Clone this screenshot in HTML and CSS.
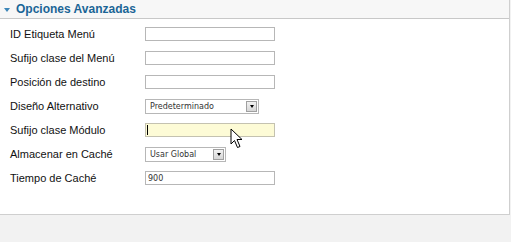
FILE: index.html
```html
<!DOCTYPE html>
<html lang="es">
  <head>
    <meta charset="UTF-8" />
    <title>Opciones Avanzadas</title>
    <link rel="stylesheet" href="styles.css">
  </head>
  <body>
    <div class="panel">
      <h3 class="panel-title"><span class="toggle"></span>Opciones Avanzadas</h3>
      <div class="params">
        <div class="row">
          <label>ID Etiqueta Menú</label>
          <input type="text" class="field" value="" />
        </div>
        <div class="row">
          <label>Sufijo clase del Menú</label>
          <input type="text" class="field" value="" />
        </div>
        <div class="row">
          <label>Posición de destino</label>
          <input type="text" class="field" value="" />
        </div>
        <div class="row">
          <label>Diseño Alternativo</label>
          <div class="select wide"><span>Predeterminado</span><span class="arrow"></span></div>
        </div>
        <div class="row">
          <label>Sufijo clase Módulo</label>
          <div class="field-wrap">
            <input type="text" class="field active" value="" />
            <span class="caret"></span>
            <svg class="cursor" width="14" height="21" viewBox="0 0 14 21">
              <path d="M1 1 L1 16 L4.5 12.5 L7.5 19.5 L10 18.5 L7 11.5 L12 11.5 Z" fill="#fff" stroke="#000" stroke-width="1" stroke-linejoin="miter"/>
            </svg>
          </div>
        </div>
        <div class="row">
          <label>Almacenar en Caché</label>
          <div class="select narrow"><span>Usar Global</span><span class="arrow"></span></div>
        </div>
        <div class="row">
          <label>Tiempo de Caché</label>
          <input type="text" class="field" value="900" />
        </div>
      </div>
    </div>
  </body>
</html>
```

FILE: styles.css
```css
body {
  margin: 0;
  background-color: #f2f2f2;
  font-family: "Liberation Sans", Arial, sans-serif;
}
.panel {
  width: 509px;
  height: 214px;
  background-color: #fff;
  border-right: 1px solid #cfcfcf;
  border-bottom: 1px solid #cfcfcf;
}
.panel-title {
  display: flex;
  align-items: center;
  margin: 0;
  height: 18px;
  padding-left: 4px;
  background-color: #f7f7f7;
  border-bottom: 1px solid #c8c8c8;
  color: #1b6596;
  font-size: 12px;
  font-weight: bold;
}
.toggle {
  width: 0;
  height: 0;
  margin-right: 6px;
  margin-top: 1px;
  border-left: 3px solid transparent;
  border-right: 3px solid transparent;
  border-top: 4px solid #3d86b8;
}
.params {
  padding: 3px 0 0 10px;
}
.row {
  display: flex;
  align-items: center;
  height: 24px;
}
.row label {
  width: 135px;
  font-size: 11px;
  color: #111;
}
.field {
  box-sizing: border-box;
  width: 130px;
  height: 14px;
  margin: 0;
  padding: 0 2px;
  border: 1px solid #b7b7b7;
  background-color: #fff;
  font-family: "DejaVu Sans", sans-serif;
  font-size: 8px;
  color: #333;
  outline: none;
}
.field-wrap {
  position: relative;
  display: flex;
}
.field.active {
  background-color: #fdfbd6;
  border-color: #c4c2b0;
}
.caret {
  position: absolute;
  left: 2px;
  top: 2px;
  width: 1px;
  height: 10px;
  background-color: #000;
}
.cursor {
  position: absolute;
  left: 85px;
  top: 5px;
}
.select {
  box-sizing: border-box;
  display: flex;
  align-items: center;
  justify-content: space-between;
  height: 15px;
  padding: 0 1px 0 4px;
  border: 1px solid #b7b7b7;
  background-color: #fff;
  font-family: "DejaVu Sans", sans-serif;
  font-size: 8px;
  color: #333;
}
.select.wide {
  width: 114px;
}
.select.narrow {
  width: 81px;
}
.arrow {
  box-sizing: border-box;
  display: flex;
  align-items: center;
  justify-content: center;
  width: 11px;
  height: 11px;
  border: 1px solid #a0a0a0;
  background: linear-gradient(#f2f2f2, #d6d6d6);
}
.arrow::after {
  content: "";
  border-left: 2px solid transparent;
  border-right: 2px solid transparent;
  border-top: 3px solid #000;
}
```
